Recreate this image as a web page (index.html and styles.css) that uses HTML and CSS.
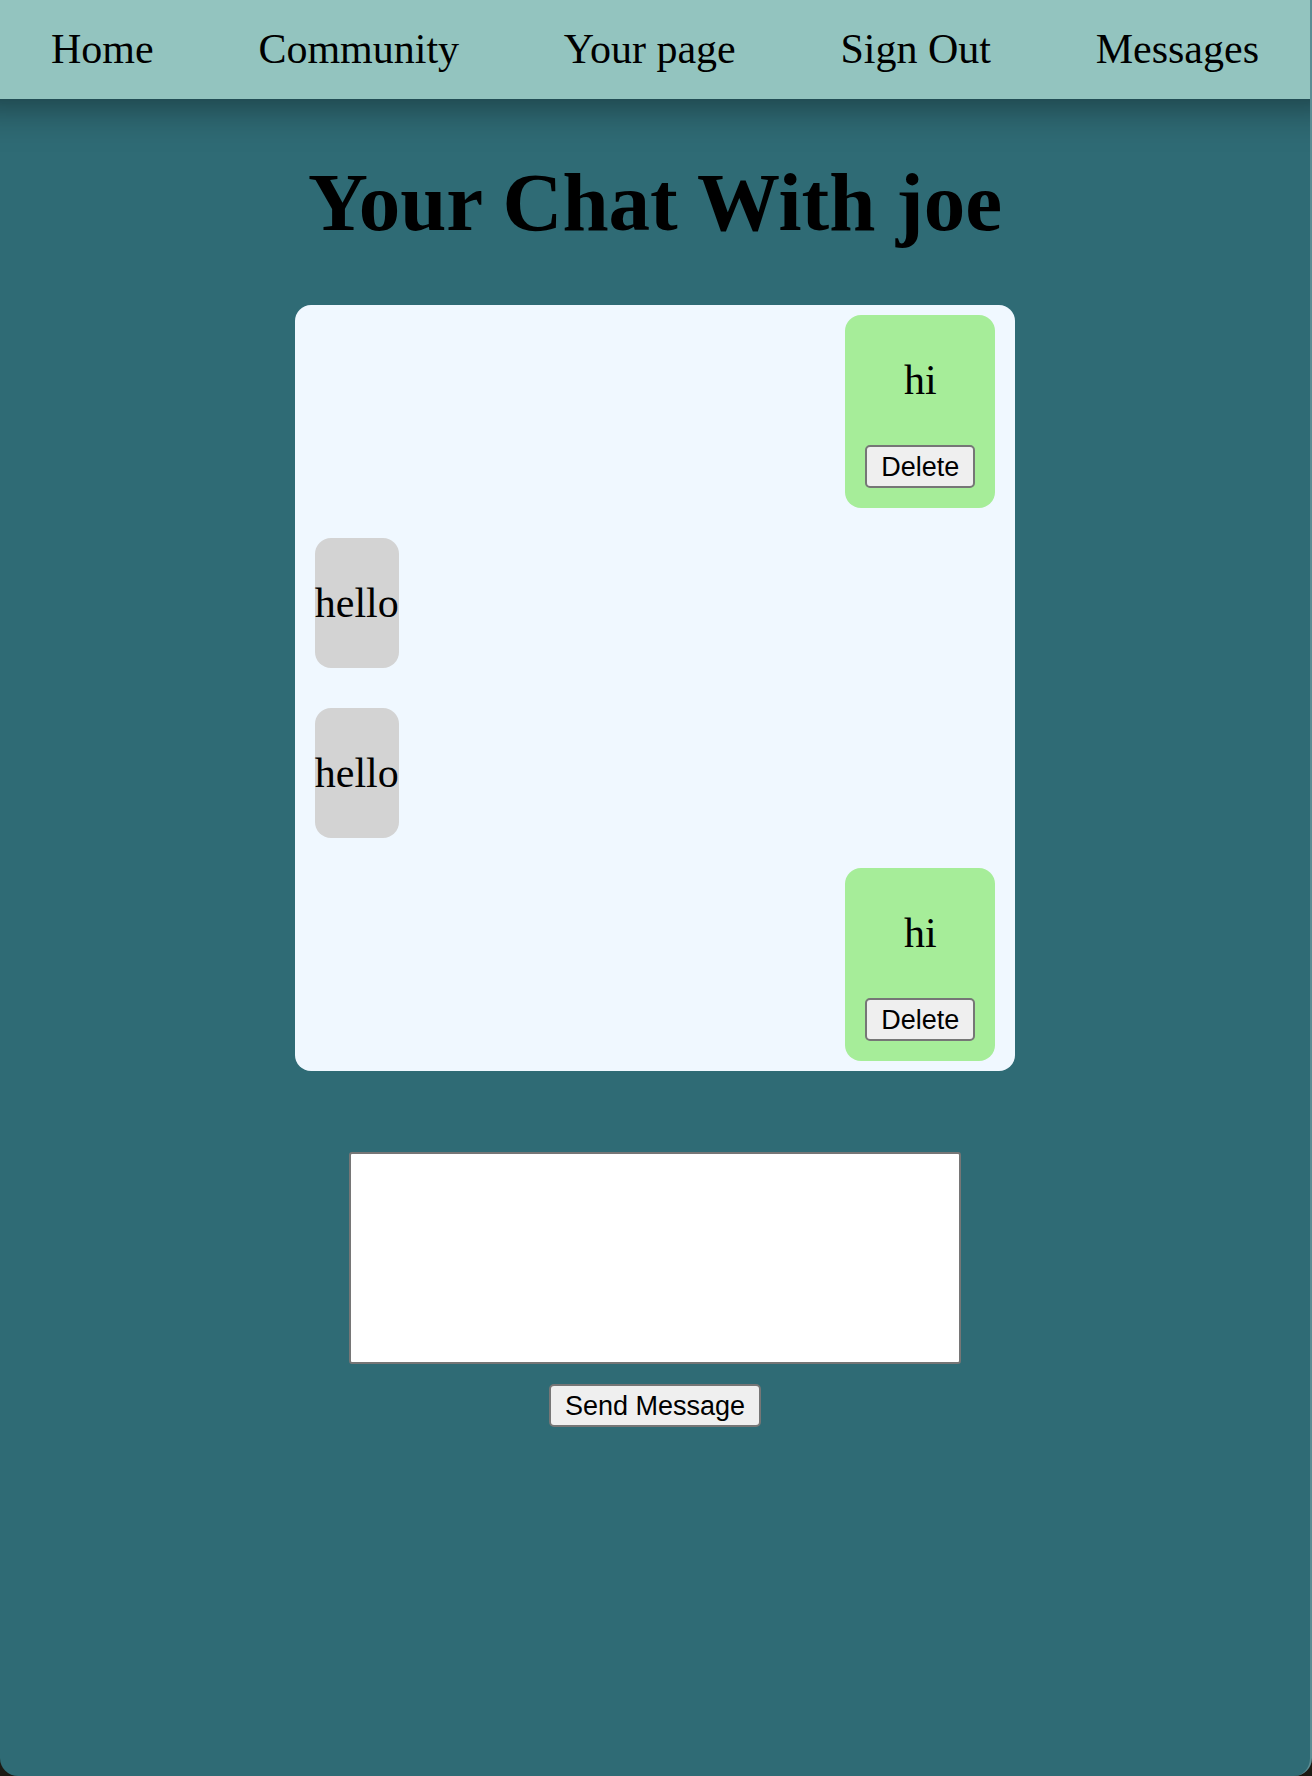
FILE: index.html
```html
<!DOCTYPE html>
<html lang="en">
<head>
<meta charset="utf-8">
<title>Messages</title>
<link rel="stylesheet" href="styles.css">
</head>
<body>
<div class="page">
<nav class="nav">
<a href="#">Home</a>
<a href="#">Community</a>
<a href="#">Your page</a>
<a href="#">Sign Out</a>
<a href="#">Messages</a>
</nav>
<main class="main">
<h1>Your Chat With joe</h1>
<section class="chat">
<div class="message sent"><p>hi</p><button class="btn" type="button">Delete</button></div>
<div class="message received"><p>hello</p></div>
<div class="message received"><p>hello</p></div>
<div class="message sent"><p>hi</p><button class="btn" type="button">Delete</button></div>
</section>
<form class="composer">
<textarea aria-label="Message"></textarea>
<button class="btn" type="submit">Send Message</button>
</form>
</main>
</div>
</body>
</html>
```
FILE: styles.css
```css
* { box-sizing: border-box; }
body {
  margin: 0;
  background: #1c1a14;
  font-family: "Liberation Serif", "Times New Roman", serif;
  font-size: 42px;
  line-height: 46px;
  color: #000;
}
.page {
  min-height: 100vh;
  overflow: hidden;
  background: #2f6b75;
  border-right: 2px solid #5d8d94;
  border-radius: 0 0 18px 18px;
}
.nav {
  display: flex;
  justify-content: space-between;
  padding: 26px 51px 27px;
  background: #93c4bf;
  box-shadow: 0 -36px 40px 40px rgba(0, 0, 0, 0.48);
}
.nav a { color: inherit; text-decoration: none; }
.main {
  display: flex;
  flex-direction: column;
  align-items: center;
}
h1 {
  margin: 56px 0;
  font-size: 83px;
  line-height: 94px;
}
.chat {
  display: flex;
  flex-direction: column;
  width: 55%;
  padding: 10px 20px;
  background: #f0f8ff;
  border-radius: 16px;
}
.message {
  display: flex;
  flex-direction: column;
  align-items: center;
  border-radius: 16px;
}
.message p { margin: 42px 0; }
.sent {
  align-self: flex-end;
  padding: 0 20px 20px;
  background: #a6ed99;
}
.received {
  align-self: flex-start;
  margin: 30px 0 10px;
  background: #d3d3d3;
}
.received + .sent { margin-top: 20px; }
.btn {
  height: 43px;
  padding: 0 14px;
  border: 2px solid #767676;
  border-radius: 5px;
  background: #efefef;
  color: #000;
  font: 27px/38px "Liberation Sans", Arial, sans-serif;
}
.composer {
  display: flex;
  flex-direction: column;
  align-items: center;
  gap: 20px;
  width: 612px;
  max-width: 100%;
  margin-top: 81px;
}
.composer textarea {
  width: 100%;
  height: 212px;
  padding: 4px;
  border: 2px solid #767676;
  border-radius: 3px;
  background: #fff;
  resize: none;
}
```
